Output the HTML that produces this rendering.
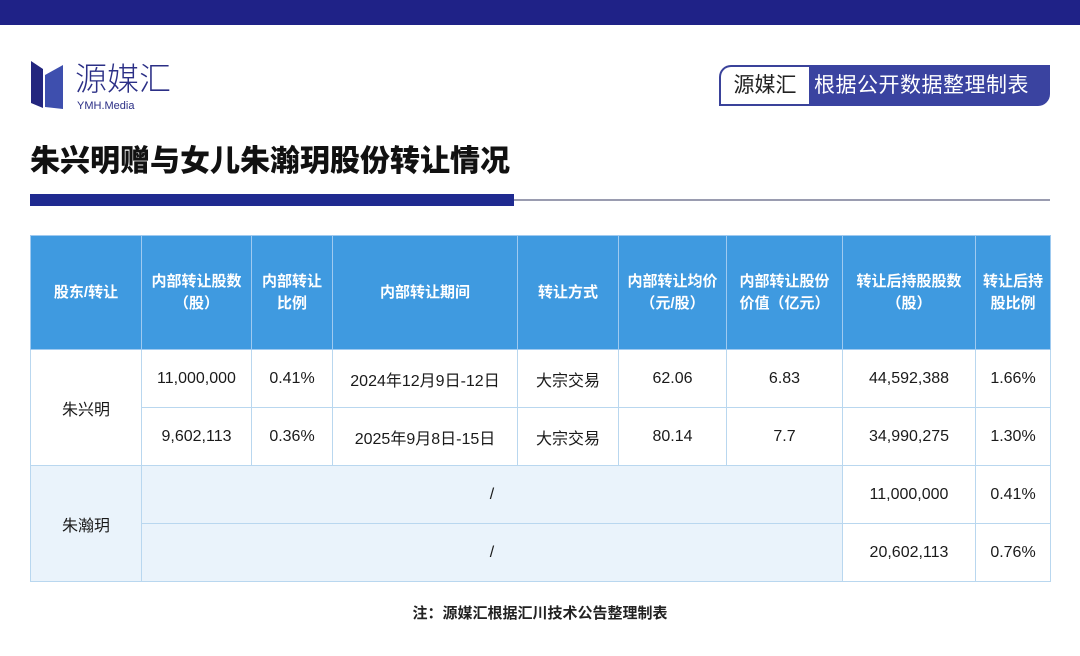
<!DOCTYPE html>
<html><head><meta charset="utf-8">
<style>
*{margin:0;padding:0;box-sizing:border-box}
body{width:1080px;height:656px;background:#fff;position:relative;overflow:hidden;font-family:"Liberation Sans","Noto Sans CJK SC",sans-serif;color:#222}
.top{position:absolute;left:0;top:0;width:1080px;height:25px;background:#1f2287}
.logo-t{position:absolute;left:75px;top:59px;font-size:32px;font-weight:300;color:#2b2f86;letter-spacing:0px;line-height:40px}
.logo-s{position:absolute;left:77px;top:100px;font-size:11px;color:#2b2f86;line-height:12px}
.badge{position:absolute;left:719px;top:65px;width:331px;height:41px}
.b1{position:absolute;left:0;top:0;width:90px;height:41px;border:2px solid #3a429a;border-right:none;border-radius:12px 0 0 0;background:#fff;font-size:21px;line-height:37px;text-align:center;color:#222}
.b2{position:absolute;left:90px;top:0;width:241px;height:41px;background:#3a43a0;border-radius:0 0 12px 0;color:#fff;font-size:21px;line-height:41px;padding-left:5px;letter-spacing:0.5px}
h1{position:absolute;left:30px;top:143px;font-size:30px;font-weight:900;line-height:38px;color:#111}
.bar{position:absolute;left:30px;top:194px;width:484px;height:12px;background:#1f2a90}
.line{position:absolute;left:514px;top:199px;width:536px;height:2px;background:#9a9cb0}
table{position:absolute;left:30px;top:235px;border-collapse:collapse;table-layout:fixed;width:1020px}
td,th{text-align:center;vertical-align:middle;font-size:16px;border:1px solid #b9d7ef;color:#1a1a1a}
th{background:#3f9ae0;color:#fff;font-weight:700;font-size:15px;line-height:22px;height:114px;border-color:#9fcaf0}
tr.r td{height:58px}
.lb td{background:#eaf3fb}
td.w{background:#fff}
.note{position:absolute;left:0;width:1080px;top:602px;text-align:center;font-size:15px;font-weight:700;color:#222}
</style></head><body>
<div class="top"></div>
<svg style="position:absolute;left:29px;top:59px" width="38" height="52">
<path d="M2 2 L14 10 L14 49 L2 44 Z" fill="#23267e"/>
<path d="M16 16 L34 6 L34 50 L16 48 Z" fill="#3e4fae"/>
</svg>
<div class="logo-t">源媒汇</div>
<div class="logo-s">YMH.Media</div>
<div class="badge"><div class="b1">源媒汇</div><div class="b2">根据公开数据整理制表</div></div>
<h1>朱兴明赠与女儿朱瀚玥股份转让情况</h1>
<div class="bar"></div><div class="line"></div>
<table>
<colgroup><col style="width:111px"><col style="width:110px"><col style="width:81px"><col style="width:185px"><col style="width:101px"><col style="width:108px"><col style="width:116px"><col style="width:133px"><col style="width:75px"></colgroup>
<tr><th>股东/转让</th><th>内部转让股数<br>（股）</th><th>内部转让<br>比例</th><th>内部转让期间</th><th>转让方式</th><th>内部转让均价<br>（元/股）</th><th>内部转让股份<br>价值（亿元）</th><th>转让后持股股数<br>（股）</th><th>转让后持<br>股比例</th></tr>
<tr class="r"><td rowspan="2">朱兴明</td><td>11,000,000</td><td>0.41%</td><td>2024年12月9日-12日</td><td>大宗交易</td><td>62.06</td><td>6.83</td><td>44,592,388</td><td>1.66%</td></tr>
<tr class="r"><td>9,602,113</td><td>0.36%</td><td>2025年9月8日-15日</td><td>大宗交易</td><td>80.14</td><td>7.7</td><td>34,990,275</td><td>1.30%</td></tr>
<tr class="r lb"><td rowspan="2">朱瀚玥</td><td colspan="6">/</td><td class="w">11,000,000</td><td class="w">0.41%</td></tr>
<tr class="r lb"><td colspan="6">/</td><td class="w">20,602,113</td><td class="w">0.76%</td></tr>
</table>
<div class="note">注：源媒汇根据汇川技术公告整理制表</div>
</body></html>
